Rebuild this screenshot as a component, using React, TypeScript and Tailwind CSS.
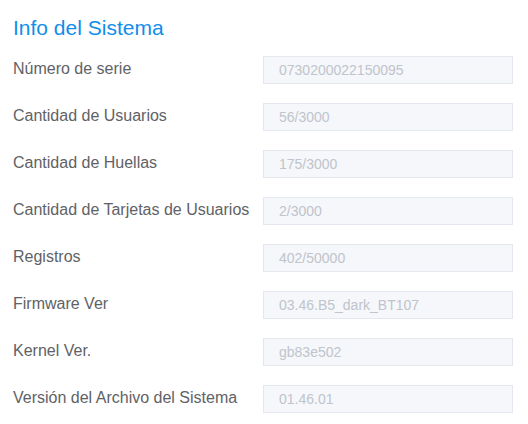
import React from "react";

const rows: [string, string][] = [
  ["Número de serie", "0730200022150095"],
  ["Cantidad de Usuarios", "56/3000"],
  ["Cantidad de Huellas", "175/3000"],
  ["Cantidad de Tarjetas de Usuarios", "2/3000"],
  ["Registros", "402/50000"],
  ["Firmware Ver", "03.46.B5_dark_BT107"],
  ["Kernel Ver.", "gb83e502"],
  ["Versión del Archivo del Sistema", "01.46.01"],
];

export default function App() {
  return (
    <div
      className="w-[528px] h-[424px] bg-white pl-[13px] pr-[15px] pt-[16px]"
      style={{ fontFamily: '"Liberation Sans", Arial, sans-serif' }}
    >
      <h2 className="text-[21px] leading-[24px] text-[#108ee9]">Info del Sistema</h2>
      <div className="mt-[16px] flex flex-col gap-[19px]">
        {rows.map(([label, value]) => (
          <div key={label} className="flex items-center h-[28px]">
            <div className="w-[250px] shrink-0 text-[16px] leading-[20px] text-[#606266] -mt-[2px]">
              {label}
            </div>
            <div className="flex-1 h-[28px] border border-[#e4e7ed] bg-[#f5f7fa] pl-[15px] flex items-center text-[14px] text-[#c0c4cc]">
              {value}
            </div>
          </div>
        ))}
      </div>
    </div>
  );
}
